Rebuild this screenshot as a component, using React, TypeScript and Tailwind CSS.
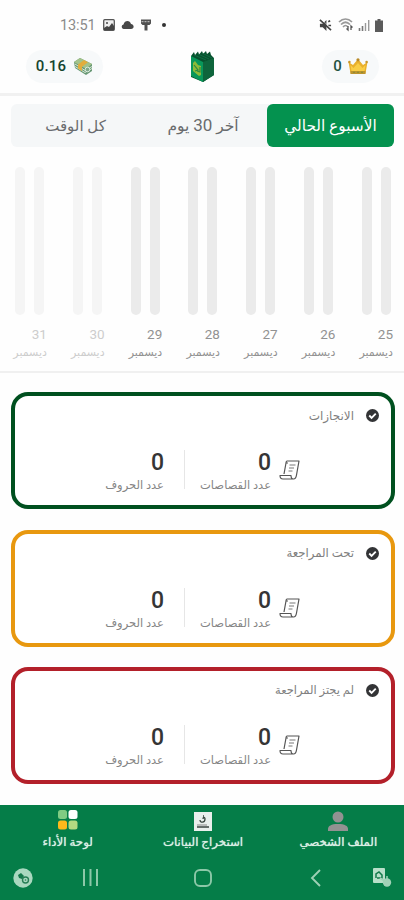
import React from "react";

const days = [25, 26, 27, 28, 29, 30, 31];

const cards = [
  { title: "الانجازات", border: "border-[#00501f]", size: "text-[12px]", gap: "mb-[21px]" },
  { title: "تحت المراجعة", border: "border-[#e8980f]", size: "text-[11.7px]", gap: "mb-[20px]" },
  { title: "لم يجتز المراجعة", border: "border-[#b3202a]", size: "text-[11.5px]", gap: "" },
];

function Muted() {
  return (
    <svg viewBox="0 0 14 14" className="size-[13px]">
      <path d="M1 5h3l4-4v12L4 9H1z" fill="#444" />
      <path d="M1 1l12 11M10 3l2-1M10 7h3" stroke="#444" strokeWidth="1.8" />
      <path d="M2 0l12 11" stroke="#fff" strokeWidth=".5" />
    </svg>
  );
}

function Wifi() {
  return (
    <svg viewBox="0 0 16 14" className="h-[14px] w-4">
      <path d="M1 4c4-4 9-4 13 0M3 6.5c3-3 6-3 9 0M5 9c2-2 3-2 5 0" fill="none" stroke="#999" strokeWidth="1.7" />
      <path d="M10 8v4l-1.5-1.5M13 12V8l1.5 1.5" fill="none" stroke="#555" strokeWidth="1.3" />
    </svg>
  );
}

function Signal() {
  return (
    <svg viewBox="0 0 12 12" className="size-3">
      <path d="M1.5 12V9M4.5 12V7" stroke="#777" strokeWidth="1.6" />
      <path d="M7.5 12V4M10.7 12V1" stroke="#999" strokeWidth="1.4" />
    </svg>
  );
}

function StatusBar() {
  return (
    <div dir="ltr" className="flex h-[50px] items-center pr-[21px] pl-[60px]">
      <span className="w-[36px] pt-px text-[14.5px] tracking-[-0.1px] text-[#8b8b8b]">13:51</span>
      <svg viewBox="0 0 12 12" className="ml-[7px] size-3">
        <rect x=".7" y=".7" width="10.6" height="10.6" rx="1" fill="#eee" stroke="#555" strokeWidth="1.3" />
        <path d="M1 9l3-2 2 1 3-4 2 3v4H1z" fill="#444" />
        <circle cx="4" cy="4" r="1" fill="#444" />
      </svg>
      <svg viewBox="0 0 13 10" className="ml-[6px] h-[10px] w-[13px]">
        <path d="M2.5 9a2.3 2.3 0 0 1 0-4.5C3 2 4.8 1 6.5 1 8 1 9.5 2 10 4c3.5.5 3.5 5 0 5z" fill="#484848" />
      </svg>
      <svg viewBox="0 0 12 12" className="ml-[6px] size-3">
        <path d="M1 .5h10v4L9.500 6H7.500v5.500H4.500V6H2.500L1 4.500z" fill="#505050" />
        <path d="M1.500 2.700h9" stroke="#ccc" strokeDasharray="2 1" />
      </svg>
      <span className="ml-[10px] size-1 rounded-full bg-[#333]" />
      <div className="ml-auto flex items-center gap-[3px]">
        <Muted />
        <span className="ml-[3px]"><Wifi /></span>
        <span className="ml-[1px]"><Signal /></span>
        <svg viewBox="0 0 8 13" className="ml-[2px] h-[13px] w-2">
          <path d="M2.5 0h3v1.5H8V13H0V1.500h2.500z" fill="#5b5b5b" />
        </svg>
      </div>
    </div>
  );
}

function Crown() {
  return (
    <svg viewBox="0 0 20 17" className="h-[17px] w-5">
      <path d="M.5 4l4.500 3L10 1l5 6 4.500-3-2 11.500h-15z" fill="#e9b02d" />
      <path d="M2.500 7l3 3L10 5l4.500 5 3-3-1 6h-13z" fill="#f9cd45" />
      <path d="M2.500 13h15v3h-15z" fill="#bd942e" />
      <circle cx="10" cy="1.8" r="1.6" fill="#b98a26" />
      <circle cx="1.4" cy="4" r="1.3" fill="#c8962c" />
      <circle cx="18.6" cy="4" r="1.3" fill="#c8962c" />
      <path d="M5 14.400h2m2 0h2m2 0h2" stroke="#8f8d36" strokeWidth="1.2" />
    </svg>
  );
}

function Cash() {
  return (
    <svg viewBox="0 0 20 17" className="h-[17px] w-5">
      <path d="M1 4l6-4 12 6v7l-6 4L2 10z" fill="#679774" />
      <path d="M1 4l6-4 12 6-6 5z" fill="#a3c38a" />
      <path d="M2 6l10 6.500 7-4M2 8.500l10 6 7-4" fill="none" stroke="#d8e9d5" strokeWidth="1" />
      <path d="M5 6.500L11 2l4 2.200-6 4.500V13l-4-2.500z" fill="#e2ad3c" />
      <circle cx="14.500" cy="11.500" r="2.300" fill="#7fa98b" stroke="#dceade" />
    </svg>
  );
}

function Logo() {
  return (
    <svg viewBox="0 0 25 32" className="h-8 w-[25px]">
      <path d="M1 5l3-4 1 3 3-3.500 1 3L12 0l1 3 3-3 1 3 3-2.500 1 3.500 3 3v17L13 31 1 26z" fill="#07512e" />
      <path d="M1 5l12 6v20L1 25z" fill="#08975a" />
      <path d="M3 12l2-2 3 4 3 1v9l-2 1-6-5z" fill="#8dbb38" />
      <path d="M4 14l4 5-3 1m5-4v5l-3-1" fill="none" stroke="#2b8b43" strokeWidth="1.2" />
      <path d="M13 11l11-4v17l-11 7z" fill="#0e653c" />
      <path d="M4 4l12 5M8 3l11 5M12 2l10 5" stroke="#0d6b40" strokeWidth="1" />
    </svg>
  );
}

function Header() {
  return (
    <header className="h-[96px] border-b-[3px] border-[#f1f1f1]">
      <StatusBar />
      <div className="grid h-[33px] grid-cols-3 items-center pr-[25px] pl-[26px]">
        <div dir="ltr" className="flex h-[33px] w-[57px] items-center justify-center gap-[6px] justify-self-start rounded-full bg-[#f7f9fa] font-medium text-[#24523f]">
          <span className="text-[15px]">0</span><Crown />
        </div>
        <div className="flex justify-center"><Logo /></div>
        <div dir="ltr" className="flex h-[33px] w-[77px] items-center justify-center gap-[7px] justify-self-end rounded-full bg-[#f7f9fa] font-medium text-[#14442f]">
          <span className="text-[15px] tracking-[.2px]">0.16</span><Cash />
        </div>
      </div>
    </header>
  );
}

function Tabs() {
  return (
    <div className="mr-[10px] ml-[11px] mt-2 flex h-[43px] rounded-[6px] bg-[#f5f7f8] text-[#696b6d]">
      <button className="flex w-[127px] items-center justify-center rounded-[6px] bg-[#04924f] pt-[2px] text-[15.4px] whitespace-nowrap text-white">الأسبوع الحالي</button>
      <button className="flex w-[128px] items-center justify-center pt-px text-[15.5px] whitespace-nowrap"><span>آخر <span className="text-[17px]">30</span> يوم</span></button>
      <button className="flex flex-1 items-center justify-center pt-px pl-px text-[15px] whitespace-nowrap">كل الوقت</button>
    </div>
  );
}

function Chart() {
  return (
    <section className="mt-5 h-[206px] border-b-2 border-[#f0f0f0] pr-[11px] pl-[10px]">
      <div className="grid grid-cols-[repeat(7,57.7px)]">
        {days.map((day) => (
          <div key={day} className={day > 29 ? "opacity-45" : ""}>
            <div className="flex gap-[9px] pr-[2.5px]">
              <div className="h-[148px] w-[10px] rounded-full bg-[#ebebeb]" />
              <div className="h-[148px] w-[10px] rounded-full bg-[#ebebeb]" />
            </div>
            <div className="mt-[11px] h-[17px] text-[13.5px] leading-[17px] text-[#929292]">{day}</div>
            <div className="h-[20px] text-[11px] leading-[20px] whitespace-nowrap text-[#929292]">ديسمبر</div>
          </div>
        ))}
      </div>
    </section>
  );
}

function Scroll() {
  return (
    <svg viewBox="0 0 21 20" className="h-5 w-[21px]" fill="none" stroke="#555" strokeWidth="1.2" strokeLinejoin="round">
      <path d="M5 14L7 3c.3-1.500 0-2 1-2h12l-2.500 14c-.3 2-1 4-3 4H4c-2 0-3-1-3-3.500h11c0 2 1 3.500 2.500 3.500M7 3h2" />
      <path d="M10.500 5h6M10 8h5M9.500 11h4" strokeWidth=".8" />
    </svg>
  );
}

function Stat({ label }: { label: string }) {
  return (
    <div>
      <div className="h-[26px] text-[23px] leading-[27px] font-medium text-[#353535]">0</div>
      <div className="h-5 text-[11.5px] leading-[20px] whitespace-nowrap text-[#858585]">{label}</div>
    </div>
  );
}

function Card({ title, border, size, gap }: (typeof cards)[number]) {
  return (
    <article className={`mr-[9px] ml-[11px] h-[117px] rounded-[17px] border-4 bg-white ${border} ${gap}`}>
      <div className="flex h-[38px] items-center gap-3 pt-[1px] pr-[12px]">
        <svg viewBox="0 0 14 14" className="size-[13px]">
          <circle cx="7" cy="7" r="7" fill="#333436" />
          <path d="M3.5 7l2.500 2.500L10.500 5" stroke="white" strokeWidth="2" fill="none" />
        </svg>
        <h2 className={`${size} whitespace-nowrap text-[#808080]`}>{title}</h2>
      </div>
      <div className="flex pt-[12px] pr-[91px]">
        <div className="mt-[14px] ml-[8px]"><Scroll /></div>
        <div className="w-[86px] pt-[3px]"><Stat label="عدد القصاصات" /></div>
        <div className="mt-1 h-[39px] w-px bg-[#e6e6e6]" />
        <div className="mr-[20px] pt-[3px]"><Stat label="عدد الحروف" /></div>
      </div>
    </article>
  );
}

function Footer() {
  return (
    <footer className="mt-[21px] h-[95px] bg-[#057d48] text-[#dbeee4]">
      <nav className="flex h-[51px] justify-between pt-[5px] text-[11.8px] leading-[18px] text-shadow-[0_0_0.8px_#dbeee4]">
        <div className="flex w-[132px] flex-col items-center whitespace-nowrap">
          <svg viewBox="0 0 20 22" className="h-[22px] w-5" fill="#929292">
            <circle cx="10" cy="7" r="5.5" />
            <path d="M0 21v-2c0-3 3-5 10-5s10 2 10 5v2z" />
          </svg>
          <span className="mt-px">الملف الشخصي</span>
        </div>
        <div className="flex w-[138px] flex-col items-center pr-[2px] whitespace-nowrap">
          <svg viewBox="0 0 20 22" className="h-[22px] w-5">
            <rect x="1" y="2" width="18" height="19" fill="#e9efec" />
            <path d="M7 10c0 3 5 3 5-1 0-2-2-2-2 0m0-3h1M4 17h12" fill="none" stroke="#3b4640" strokeWidth="1.3" />
            <path d="M4 15h10" stroke="#888" />
          </svg>
          <span className="mt-px">استخراج البيانات</span>
        </div>
        <div className="flex w-[136px] flex-col items-center whitespace-nowrap">
          <svg viewBox="0 0 20 22" className="h-[22px] w-5">
            <rect width="9" height="9" rx="2.5" fill="#80cb83" />
            <rect x="10.5" width="9" height="9" rx="2.5" fill="#fff" />
            <rect y="10.5" width="9" height="9" rx="2.5" fill="#fdb91b" />
            <rect x="10.5" y="10.5" width="9" height="9" rx="2.5" fill="#b4d982" />
          </svg>
          <span className="mt-px">لوحة الأداء</span>
        </div>
      </nav>
      <div dir="ltr" className="flex h-[44px] items-center pb-[1px] pl-[13px]">
        <svg viewBox="0 0 20 20" className="size-5">
          <circle cx="10" cy="10" r="9.7" fill="#a9d8bf" />
          <path d="M5 7l3-2 3 3-2 3-3-1z" fill="#14784b" />
          <circle cx="12.5" cy="12" r="3" fill="none" stroke="#267e55" strokeWidth="1.4" />
          <circle cx="12.5" cy="12" r=".8" fill="#267e55" />
        </svg>
        <svg viewBox="0 0 17 17" className="ml-[49px] size-[17px]">
          <path d="M2 0v17M8.500 0v17M15 0v17" stroke="#8cc8a8" strokeWidth="2" />
        </svg>
        <svg viewBox="0 0 18 18" className="ml-[95px] size-[18px]">
          <rect x="1" y="1" width="16" height="16" rx="5" fill="none" stroke="#8cc8a8" strokeWidth="1.9" />
        </svg>
        <svg viewBox="0 0 12 18" className="ml-[98px] h-[18px] w-3">
          <path d="M10 1L2 9l8 8" fill="none" stroke="#9ed0b5" strokeWidth="1.9" />
        </svg>
        <svg viewBox="0 0 19 20" className="ml-[51px] h-5 w-[19px]">
          <rect x="0" y="0" width="12" height="15" rx="1" fill="#b8dfc9" />
          <path d="M3 10V6l3-2 3 3v3H4" fill="none" stroke="#12794a" strokeWidth="1.5" />
          <path d="M7 10l4 2.500" stroke="#a1d2b7" strokeWidth="2" />
          <circle cx="14" cy="14.500" r="4.200" fill="#a1d2b7" />
          <path d="M14 8v5" stroke="#a1d2b7" strokeWidth="1.500" />
        </svg>
      </div>
    </footer>
  );
}

export default function App() {
  return (
    <main dir="rtl" className="h-[900px] w-[404px] overflow-hidden bg-[#fefefe] font-[Roboto,'DejaVu_Sans',sans-serif]">
      <Header />
      <Tabs />
      <Chart />
      <section className="pt-[19px]">
        {cards.map((card) => <Card key={card.title} {...card} />)}
      </section>
      <Footer />
    </main>
  );
}
